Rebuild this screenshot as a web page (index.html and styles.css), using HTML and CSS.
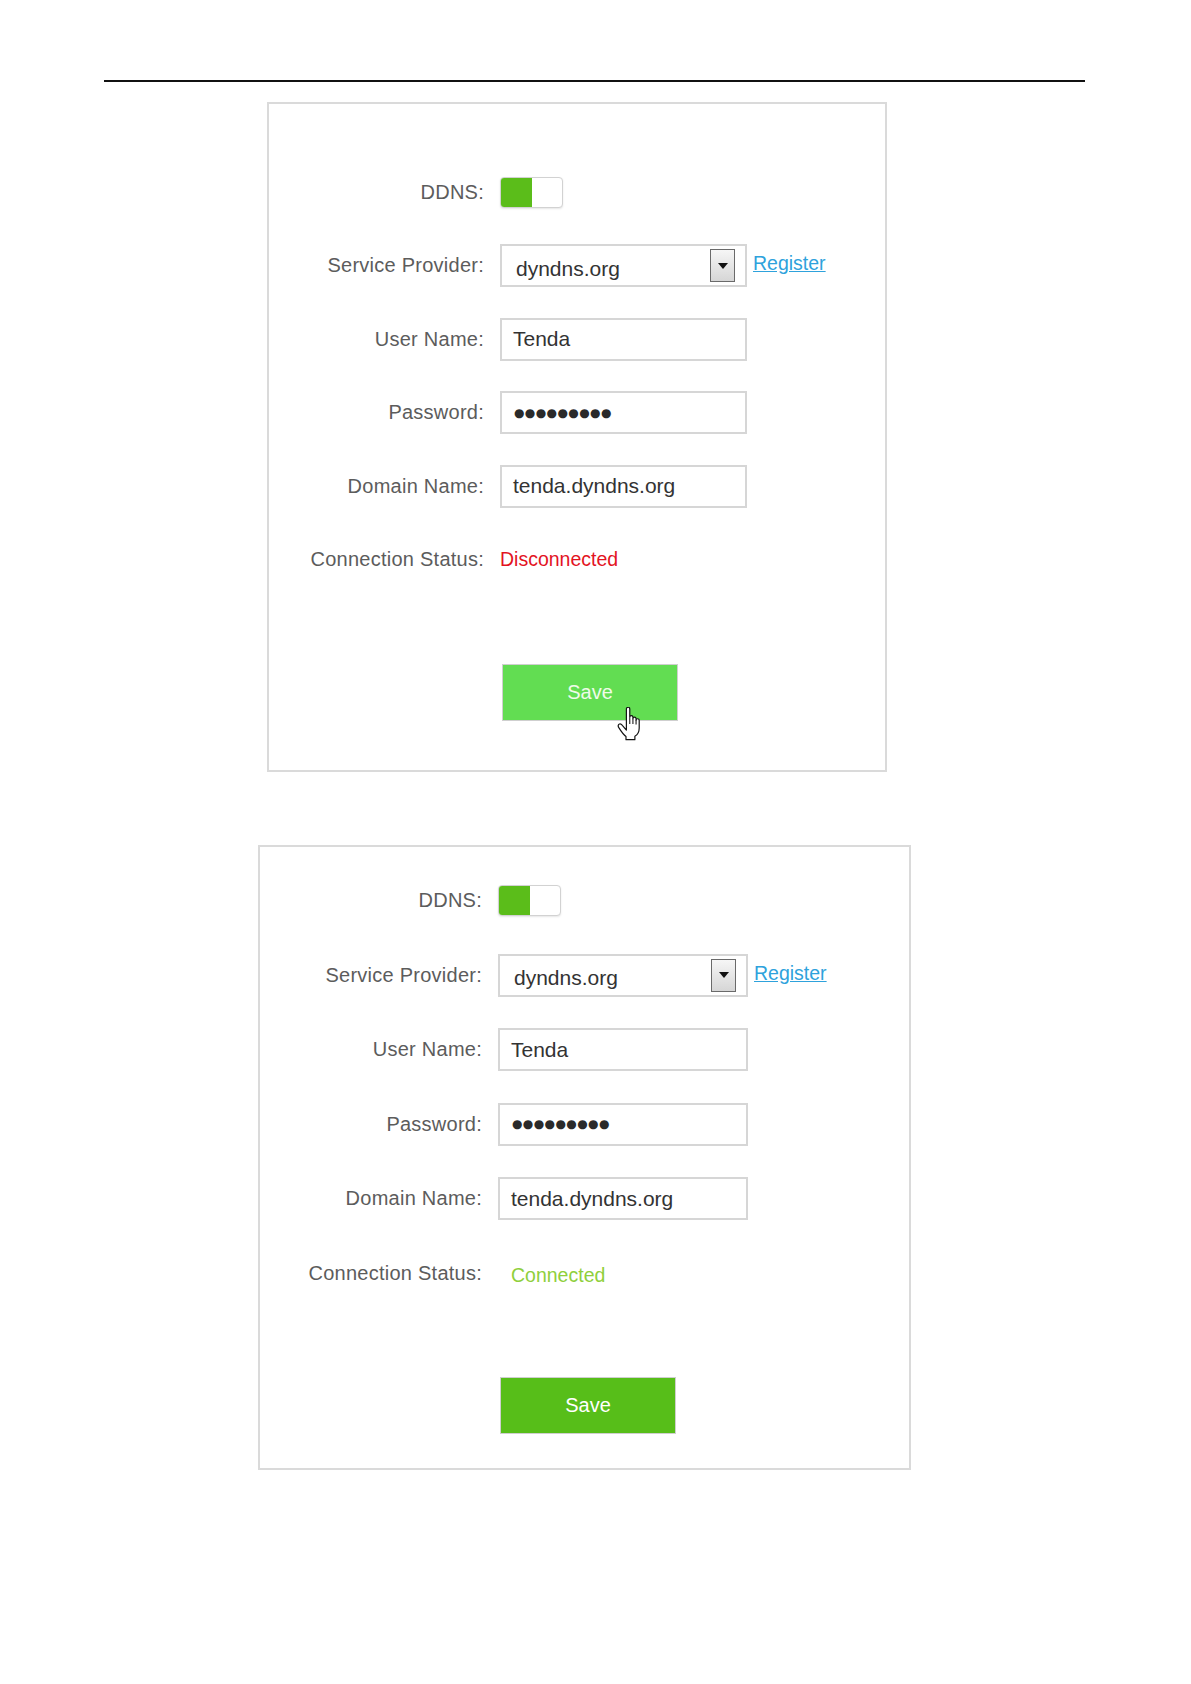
FILE: index.html
```html
<!DOCTYPE html>
<html>
  <head>
    <meta charset="UTF-8" />
    <meta name="viewport" content="width=device-width, initial-scale=1.0" />
    <title>DDNS</title>
    <link rel="stylesheet" href="styles.css">
  </head>
  <body>
    <div class="rule"></div>

    <!-- before: disconnected -->
    <div class="panel panel-first">
      <div class="form">
        <div class="label">DDNS:</div>
        <div class="field"><span class="toggle"><span class="toggle-on"></span></span></div>

        <div class="label">Service Provider:</div>
        <div class="field">
          <div class="select">
            <span class="select-value">dyndns.org</span>
            <span class="select-arrow"><span class="caret"></span></span>
          </div>
          <a class="register" href="#">Register</a>
        </div>

        <div class="label">User Name:</div>
        <div class="field"><div class="input">Tenda</div></div>

        <div class="label">Password:</div>
        <div class="field"><div class="input dots">●●●●●●●●●</div></div>

        <div class="label">Domain Name:</div>
        <div class="field"><div class="input">tenda.dyndns.org</div></div>

        <div class="label">Connection Status:</div>
        <div class="field"><span class="status off">Disconnected</span></div>
      </div>
      <div class="actions">
        <button class="save save-hover">Save
          <svg class="hand" width="26" height="34" viewBox="0 0 19 26" xmlns="http://www.w3.org/2000/svg">
            <path d="M7.5 1.5C7.5 0.7 8.1 0.2 8.8 0.2C9.5 0.2 10.1 0.7 10.1 1.5L10.1 7.8C10.1 7.1 10.6 6.6 11.3 6.6C12 6.6 12.5 7.1 12.5 7.8L12.5 9C12.5 8.3 13 7.8 13.7 7.8C14.4 7.8 14.9 8.3 14.9 9L14.9 10.2C14.9 9.5 15.4 9 16.1 9C16.8 9 17.3 9.5 17.3 10.2L17.3 16C17.3 19 15.8 21.3 14 22.4L14 25L7.2 25L7.2 22.6C5.6 21.4 3.2 18.2 1.6 15.6C0.9 14.4 1.3 13.3 2.3 13C3.1 12.8 3.8 13.3 4.4 14.1L7.5 17.6Z" fill="#fff" stroke="#111" stroke-width="0.9" stroke-linejoin="round"/>
            <path d="M10.1 8V13M12.5 9V13M14.9 10.2V13.4" stroke="#111" stroke-width="0.8" fill="none"/>
          </svg>
        </button>
      </div>
    </div>

    <!-- after: connected -->
    <div class="panel panel-second">
      <div class="form">
        <div class="label">DDNS:</div>
        <div class="field"><span class="toggle"><span class="toggle-on"></span></span></div>

        <div class="label">Service Provider:</div>
        <div class="field">
          <div class="select">
            <span class="select-value">dyndns.org</span>
            <span class="select-arrow"><span class="caret"></span></span>
          </div>
          <a class="register" href="#">Register</a>
        </div>

        <div class="label">User Name:</div>
        <div class="field"><div class="input">Tenda</div></div>

        <div class="label">Password:</div>
        <div class="field"><div class="input dots">●●●●●●●●●</div></div>

        <div class="label">Domain Name:</div>
        <div class="field"><div class="input">tenda.dyndns.org</div></div>

        <div class="label">Connection Status:</div>
        <div class="field"><span class="status on">Connected</span></div>
      </div>
      <div class="actions">
        <button class="save">Save</button>
      </div>
    </div>
  </body>
</html>
```

FILE: styles.css
```css
body {
  margin: 0;
  background: #fff;
  font-family: "Liberation Sans", Arial, sans-serif;
}
.rule {
  width: 981px;
  height: 2px;
  margin: 80px 0 0 104px;
  background: #111;
}
.panel {
  box-sizing: border-box;
  border: 2px solid #dadada;
}
.panel-first {
  width: 620px;
  margin: 20px 0 0 267px;
  padding: 66px 0 49px 0;
}
.panel-second {
  width: 653px;
  margin: 73px 0 0 258px;
  padding: 32px 0 34px 0;
}
.form {
  display: grid;
  grid-template-columns: 215px auto;
  column-gap: 16px;
  grid-auto-rows: 44px;
  row-gap: 29.5px;
}
.panel-second .form {
  grid-template-columns: 222px auto;
  row-gap: 30.5px;
}
.label {
  display: flex;
  align-items: center;
  justify-content: flex-end;
  font-size: 20px;
  letter-spacing: 0.25px;
  color: #5c5c5c;
}
.field {
  display: flex;
  align-items: center;
  gap: 6px;
}
.toggle {
  display: flex;
  width: 63px;
  height: 31px;
  box-sizing: border-box;
  border: 1.5px solid #d2d2d2;
  border-radius: 4px;
  overflow: hidden;
  background: #fff;
  box-shadow: 0 1px 2px rgba(0, 0, 0, 0.1);
}
.toggle-on {
  width: 31px;
  background: #5bbd1a;
}
.select,
.input {
  box-sizing: border-box;
  width: 247px;
  height: 43px;
  border: 2px solid #d6d6d6;
  font-size: 21px;
  color: #333;
}
.panel-second .select,
.panel-second .input {
  width: 250px;
}
.select {
  display: flex;
  align-items: center;
  justify-content: space-between;
  padding: 4px 10px 0 14px;
}
.select-value {
  padding-top: 2px;
}
.select-arrow {
  display: flex;
  align-items: center;
  justify-content: center;
  box-sizing: border-box;
  width: 25px;
  height: 33px;
  margin-top: -4px;
  border: 1.5px solid #6a6a6a;
  background: linear-gradient(#f6f6f6, #d6d6d6);
}
.caret {
  width: 0;
  height: 0;
  border-left: 5px solid transparent;
  border-right: 5px solid transparent;
  border-top: 6px solid #111;
}
.register {
  font-size: 19.5px;
  color: #2ea2dc;
  text-decoration: underline;
  margin-top: -4px;
}
.input {
  display: flex;
  align-items: center;
  padding-left: 11px;
}
.dots {
  font-family: "DejaVu Sans", sans-serif;
  font-size: 12px;
  letter-spacing: 0.4px;
  color: #2a2a2a;
  padding-left: 12px;
}
.status {
  font-size: 19.5px;
}
.status.off {
  color: #e3131f;
}
.status.on {
  color: #8fcf3c;
  margin: 4px 0 0 13px;
}
.actions {
  margin-top: 82px;
  padding-left: 233px;
}
.panel-second .actions {
  padding-left: 240px;
}
.save {
  position: relative;
  width: 176px;
  height: 57px;
  border: 1px solid #cfcfcf;
  background: #57be19;
  color: #fff;
  font-family: "Liberation Sans", Arial, sans-serif;
  font-size: 20px;
  cursor: pointer;
}
.save-hover {
  background: #62dd52;
  color: #effbe9;
}
.hand {
  position: absolute;
  left: 113px;
  top: 42px;
}
```
